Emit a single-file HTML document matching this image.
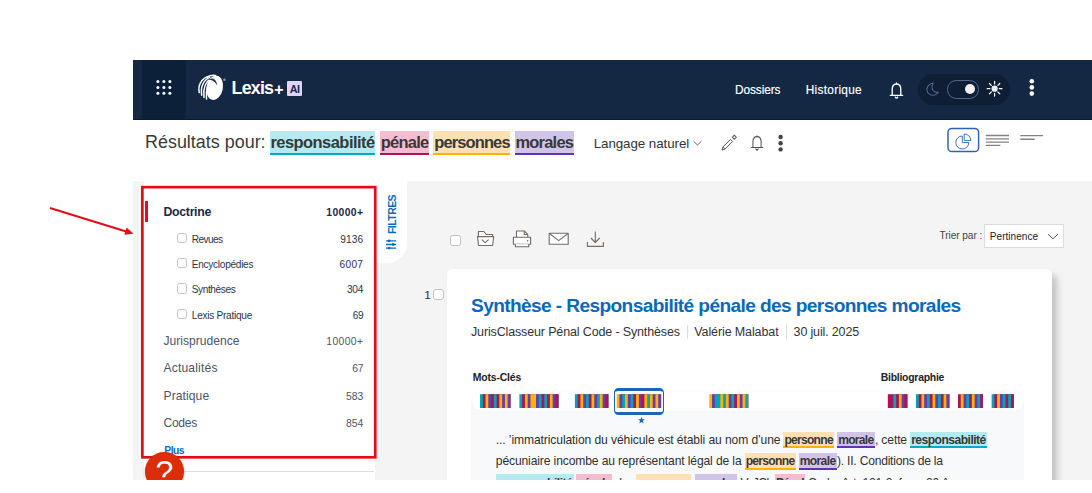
<!DOCTYPE html>
<html lang="fr">
<head>
<meta charset="utf-8">
<title>Lexis+ AI</title>
<style>
*{box-sizing:border-box;margin:0;padding:0}
html,body{width:1092px;height:493px;overflow:hidden;background:#fff}
body{font-family:"Liberation Sans",sans-serif;color:#333;position:relative}
.abs{position:absolute}
.t{position:absolute;white-space:nowrap;line-height:1}
svg{position:absolute;overflow:visible}
#app{position:absolute;left:133px;top:60px;width:959px;height:420px;overflow:hidden;background:#f4f4f4}
#pg{position:absolute;left:-133px;top:-60px;width:1092px;height:493px}
#hdr{left:133px;top:60px;width:959px;height:60px;background:#142843;border-bottom:1px solid #08193a}
#gridbtn{left:142px;top:60px;width:44px;height:59px;background:#0c203a}
#sbar{left:133px;top:120px;width:959px;height:61px;background:#fff}
.hb{position:absolute;border-bottom:2px solid}
.c1{background:#b2ebf2;border-color:#00acc1}
.c2{background:#f8bbd0;border-color:#ad1457}
.c3{background:#ffe0b2;border-color:#ffb300}
.c4{background:#d1c4e9;border-color:#5e35b1}
#panel{left:144px;top:181px;width:230.5px;height:299px;background:#fff}
#tab{left:374.5px;top:181px;width:32.5px;height:81.5px;background:#fff;border-radius:0 0 20px 0}
#redbox{left:141px;top:185.6px;width:235.7px;height:273px;border:3px solid #e8182a}
.cb{position:absolute;width:10px;height:10px;border:1px solid #c2c2c2;border-radius:2.5px;background:#fff}
#card{left:446.8px;top:269.1px;width:605.1px;height:230px;background:#fff;border-radius:5.5px;box-shadow:5px 6px 7px rgba(0,0,0,.21)}
#snip{left:471px;top:401px;width:552.7px;height:90px;background:#f8f9fb}
#pill{left:471.6px;top:391.8px;width:552.6px;height:19px;background:#fff;border-radius:10px;box-shadow:0 0 1.5px rgba(0,0,0,.10)}
.g{position:absolute;top:394.2px;height:13.8px;display:flex}
.g i{display:block;width:2.77px;height:100%;flex:none}
.a{background:#00a5b8}.b{background:#ad1457}.c{background:#ffb300}.d{background:#673ab7}
#sel{left:613.8px;top:387.8px;width:50.4px;height:27.4px;border:1.2px solid #1f63b5;border-top-width:3.2px;border-bottom-width:3.4px;border-radius:4.5px;background:#fff}
#sortbox{left:984.3px;top:224.4px;width:79.3px;height:23.4px;background:#fff;border:1px solid #dcdcdc}
#help{left:145px;top:452.3px;width:38.6px;height:38.6px;border-radius:50%;background:#da2d08;box-shadow:0 1px 3px rgba(0,0,0,.25)}
#hline{left:183px;top:470.7px;width:191px;height:1px;background:#dcdfe3}
#piebtn{left:947.1px;top:127.6px;width:32.3px;height:24.7px;border:1.5px solid #2f62b3;border-radius:4.5px;background:#fff}
#mark{left:145.3px;top:201.3px;width:3.2px;height:20.5px;background:#e00f20}
#tog{left:918px;top:74px;width:92px;height:30.6px;border-radius:15.3px;background:#0d1e35}
#track{left:946.6px;top:80.1px;width:32.8px;height:18.5px;border-radius:9.3px;border:1px solid #53688c}
#knob{left:964.8px;top:84.2px;width:10.2px;height:10.2px;border-radius:50%;background:#f0f0f0}
#ai{left:287.1px;top:81.2px;width:15.4px;height:15px;background:#e2d3fa;border-radius:1px}
.vsep{position:absolute;width:1px;background:#dcdcdc;top:325px;height:14px}
</style>
</head>
<body>
<svg style="left:0;top:0" width="1092" height="493" viewBox="0 0 1092 493"><line x1="50" y1="208" x2="127" y2="231.8" stroke="#e70b16" stroke-width="2.1"/><path d="M133.6 233.7 L124.3 234.7 L126.6 227.6 Z" fill="#e70b16"/></svg>
<div id="app"><div id="pg">
<div id="hdr" class="abs"></div>
<div id="gridbtn" class="abs"></div>
<div id="sbar" class="abs"></div>
<div id="panel" class="abs"></div>
<div id="tab" class="abs"></div>
<div id="card" class="abs"></div>
<div id="snip" class="abs"></div>
<div id="pill" class="abs"></div>
<div id="mark" class="abs"></div>
<div id="hline" class="abs"></div>
<div class="cb" style="left:177.3px;top:233px;width:10.2px;height:10.2px"></div>
<div class="cb" style="left:177.3px;top:258.2px;width:10.2px;height:10.2px"></div>
<div class="cb" style="left:177.3px;top:283.4px;width:10.2px;height:10.2px"></div>
<div class="cb" style="left:177.3px;top:308.6px;width:10.2px;height:10.2px"></div>
<div class="cb" style="left:450.2px;top:235.2px;width:11px;height:11px"></div>
<div class="cb" style="left:433.2px;top:289px;width:11.2px;height:11.3px;border-radius:3px"></div>
<div id="sortbox" class="abs"></div>
<div id="tog" class="abs"></div>
<div id="track" class="abs"></div>
<div id="knob" class="abs"></div>
<div id="ai" class="abs"></div>
<div class="vsep" style="left:687px"></div>
<div class="vsep" style="left:786px"></div>
<div id="sel" class="abs"></div>
<svg style="left:0;top:0" width="1092" height="493" viewBox="0 0 1092 493">
<rect x="480.00" y="394.2" width="30.47" height="13.8" fill="#00a5b8"/>
<rect x="482.77" y="394.2" width="27.70" height="13.8" fill="#ad1457"/>
<rect x="485.54" y="394.2" width="24.93" height="13.8" fill="#ffb300"/>
<rect x="488.31" y="394.2" width="22.16" height="13.8" fill="#673ab7"/>
<rect x="491.08" y="394.2" width="19.39" height="13.8" fill="#ad1457"/>
<rect x="493.85" y="394.2" width="16.62" height="13.8" fill="#00a5b8"/>
<rect x="496.62" y="394.2" width="13.85" height="13.8" fill="#ad1457"/>
<rect x="499.39" y="394.2" width="11.08" height="13.8" fill="#ffb300"/>
<rect x="502.16" y="394.2" width="8.31" height="13.8" fill="#673ab7"/>
<rect x="504.93" y="394.2" width="5.54" height="13.8" fill="#ffb300"/>
<rect x="507.70" y="394.2" width="2.77" height="13.8" fill="#673ab7"/>
<rect x="519.40" y="394.2" width="38.78" height="13.8" fill="#00a5b8"/>
<rect x="522.17" y="394.2" width="36.01" height="13.8" fill="#ad1457"/>
<rect x="524.94" y="394.2" width="33.24" height="13.8" fill="#ffb300"/>
<rect x="527.71" y="394.2" width="30.47" height="13.8" fill="#673ab7"/>
<rect x="530.48" y="394.2" width="27.70" height="13.8" fill="#ffb300"/>
<rect x="536.02" y="394.2" width="22.16" height="13.8" fill="#673ab7"/>
<rect x="538.79" y="394.2" width="19.39" height="13.8" fill="#00a5b8"/>
<rect x="541.56" y="394.2" width="16.62" height="13.8" fill="#ad1457"/>
<rect x="544.33" y="394.2" width="13.85" height="13.8" fill="#00a5b8"/>
<rect x="547.10" y="394.2" width="11.08" height="13.8" fill="#ad1457"/>
<rect x="549.87" y="394.2" width="8.31" height="13.8" fill="#ffb300"/>
<rect x="552.64" y="394.2" width="5.54" height="13.8" fill="#673ab7"/>
<rect x="555.41" y="394.2" width="2.77" height="13.8" fill="#ad1457"/>
<rect x="574.90" y="394.2" width="33.24" height="13.8" fill="#00a5b8"/>
<rect x="577.67" y="394.2" width="30.47" height="13.8" fill="#ad1457"/>
<rect x="580.44" y="394.2" width="27.70" height="13.8" fill="#ffb300"/>
<rect x="583.21" y="394.2" width="24.93" height="13.8" fill="#673ab7"/>
<rect x="585.98" y="394.2" width="22.16" height="13.8" fill="#00a5b8"/>
<rect x="588.75" y="394.2" width="19.39" height="13.8" fill="#ad1457"/>
<rect x="591.52" y="394.2" width="16.62" height="13.8" fill="#ffb300"/>
<rect x="594.29" y="394.2" width="13.85" height="13.8" fill="#673ab7"/>
<rect x="597.06" y="394.2" width="11.08" height="13.8" fill="#00a5b8"/>
<rect x="599.83" y="394.2" width="8.31" height="13.8" fill="#ffb300"/>
<rect x="602.60" y="394.2" width="5.54" height="13.8" fill="#673ab7"/>
<rect x="605.37" y="394.2" width="2.77" height="13.8" fill="#ad1457"/>
<rect x="616.70" y="394.2" width="44.32" height="13.8" fill="#ffb300"/>
<rect x="619.47" y="394.2" width="41.55" height="13.8" fill="#673ab7"/>
<rect x="622.24" y="394.2" width="38.78" height="13.8" fill="#00a5b8"/>
<rect x="625.01" y="394.2" width="36.01" height="13.8" fill="#ffb300"/>
<rect x="627.78" y="394.2" width="33.24" height="13.8" fill="#673ab7"/>
<rect x="630.55" y="394.2" width="30.47" height="13.8" fill="#00a5b8"/>
<rect x="633.32" y="394.2" width="27.70" height="13.8" fill="#ad1457"/>
<rect x="636.09" y="394.2" width="24.93" height="13.8" fill="#ffb300"/>
<rect x="638.86" y="394.2" width="22.16" height="13.8" fill="#673ab7"/>
<rect x="641.63" y="394.2" width="19.39" height="13.8" fill="#ad1457"/>
<rect x="644.40" y="394.2" width="16.62" height="13.8" fill="#ffb300"/>
<rect x="647.17" y="394.2" width="13.85" height="13.8" fill="#00a5b8"/>
<rect x="649.94" y="394.2" width="11.08" height="13.8" fill="#ffb300"/>
<rect x="652.71" y="394.2" width="8.31" height="13.8" fill="#673ab7"/>
<rect x="655.48" y="394.2" width="5.54" height="13.8" fill="#ffb300"/>
<rect x="658.25" y="394.2" width="2.77" height="13.8" fill="#673ab7"/>
<rect x="709.30" y="394.2" width="38.78" height="13.8" fill="#ffb300"/>
<rect x="712.07" y="394.2" width="36.01" height="13.8" fill="#673ab7"/>
<rect x="714.84" y="394.2" width="33.24" height="13.8" fill="#00a5b8"/>
<rect x="720.38" y="394.2" width="27.70" height="13.8" fill="#ffb300"/>
<rect x="723.15" y="394.2" width="24.93" height="13.8" fill="#00a5b8"/>
<rect x="725.92" y="394.2" width="22.16" height="13.8" fill="#ffb300"/>
<rect x="728.69" y="394.2" width="19.39" height="13.8" fill="#673ab7"/>
<rect x="731.46" y="394.2" width="16.62" height="13.8" fill="#00a5b8"/>
<rect x="734.23" y="394.2" width="13.85" height="13.8" fill="#ad1457"/>
<rect x="737.00" y="394.2" width="11.08" height="13.8" fill="#ffb300"/>
<rect x="739.77" y="394.2" width="8.31" height="13.8" fill="#673ab7"/>
<rect x="742.54" y="394.2" width="5.54" height="13.8" fill="#ffb300"/>
<rect x="745.31" y="394.2" width="2.77" height="13.8" fill="#00a5b8"/>
<rect x="887.80" y="394.2" width="19.39" height="13.8" fill="#ad1457"/>
<rect x="893.34" y="394.2" width="13.85" height="13.8" fill="#00a5b8"/>
<rect x="896.11" y="394.2" width="11.08" height="13.8" fill="#ad1457"/>
<rect x="898.88" y="394.2" width="8.31" height="13.8" fill="#ffb300"/>
<rect x="901.65" y="394.2" width="5.54" height="13.8" fill="#673ab7"/>
<rect x="904.42" y="394.2" width="2.77" height="13.8" fill="#ad1457"/>
<rect x="915.90" y="394.2" width="33.24" height="13.8" fill="#00a5b8"/>
<rect x="918.67" y="394.2" width="30.47" height="13.8" fill="#ad1457"/>
<rect x="921.44" y="394.2" width="27.70" height="13.8" fill="#ffb300"/>
<rect x="924.21" y="394.2" width="24.93" height="13.8" fill="#673ab7"/>
<rect x="926.98" y="394.2" width="22.16" height="13.8" fill="#00a5b8"/>
<rect x="929.75" y="394.2" width="19.39" height="13.8" fill="#ad1457"/>
<rect x="932.52" y="394.2" width="16.62" height="13.8" fill="#ffb300"/>
<rect x="935.29" y="394.2" width="13.85" height="13.8" fill="#673ab7"/>
<rect x="938.06" y="394.2" width="11.08" height="13.8" fill="#00a5b8"/>
<rect x="940.83" y="394.2" width="8.31" height="13.8" fill="#ad1457"/>
<rect x="943.60" y="394.2" width="5.54" height="13.8" fill="#ffb300"/>
<rect x="946.37" y="394.2" width="2.77" height="13.8" fill="#673ab7"/>
<rect x="958.00" y="394.2" width="24.93" height="13.8" fill="#ad1457"/>
<rect x="960.77" y="394.2" width="22.16" height="13.8" fill="#ffb300"/>
<rect x="963.54" y="394.2" width="19.39" height="13.8" fill="#673ab7"/>
<rect x="966.31" y="394.2" width="16.62" height="13.8" fill="#00a5b8"/>
<rect x="969.08" y="394.2" width="13.85" height="13.8" fill="#ad1457"/>
<rect x="971.85" y="394.2" width="11.08" height="13.8" fill="#ffb300"/>
<rect x="974.62" y="394.2" width="8.31" height="13.8" fill="#673ab7"/>
<rect x="977.39" y="394.2" width="5.54" height="13.8" fill="#00a5b8"/>
<rect x="980.16" y="394.2" width="2.77" height="13.8" fill="#ad1457"/>
<rect x="991.60" y="394.2" width="22.16" height="13.8" fill="#00a5b8"/>
<rect x="994.37" y="394.2" width="19.39" height="13.8" fill="#ad1457"/>
<rect x="997.14" y="394.2" width="16.62" height="13.8" fill="#ffb300"/>
<rect x="999.91" y="394.2" width="13.85" height="13.8" fill="#673ab7"/>
<rect x="1002.68" y="394.2" width="11.08" height="13.8" fill="#00a5b8"/>
<rect x="1005.45" y="394.2" width="8.31" height="13.8" fill="#ad1457"/>
<rect x="1008.22" y="394.2" width="5.54" height="13.8" fill="#00a5b8"/>
<rect x="1010.99" y="394.2" width="2.77" height="13.8" fill="#ad1457"/>
</svg>
<svg style="left:0;top:0" width="1092" height="493" viewBox="0 0 1092 493" fill="none">
<!-- grid dots -->
<g fill="#fff"><circle cx="157.9" cy="81.6" r="1.5"/><circle cx="163.9" cy="81.6" r="1.5"/><circle cx="169.9" cy="81.6" r="1.5"/><circle cx="157.9" cy="87.4" r="1.5"/><circle cx="163.9" cy="87.4" r="1.5"/><circle cx="169.9" cy="87.4" r="1.5"/><circle cx="157.9" cy="93.2" r="1.5"/><circle cx="163.9" cy="93.2" r="1.5"/><circle cx="169.9" cy="93.2" r="1.5"/></g>
<!-- logo -->
<g>
<g stroke="#fff" stroke-width="1.5" stroke-linecap="round">
<path d="M208.4 76.4 C201.4 78.6 197.6 85.4 199.3 92.6"/>
<path d="M209.8 77.4 C203.6 79.8 200.3 86.6 201.7 95.2"/>
<path d="M211 78.6 C205.8 81.4 203 88 204 97.4"/>
<path d="M212.2 79.8 C208.1 82.8 205.7 89.6 206.5 99"/>
</g>
<ellipse cx="214.7" cy="87.7" rx="8.2" ry="12.3" transform="rotate(11 214.7 87.7)" fill="#fff"/>
<path d="M207.2 77.2 C209.6 75.6 212.6 75 215.4 75.4" stroke="#fff" stroke-width="1.4" stroke-linecap="round"/>
<path d="M208.3 79.4 C210.8 78.2 213.6 78.4 215.1 79.9 C216.4 81.5 216.9 83.4 217 85.4 C215.9 83.1 214.7 81.7 212.9 80.8 C211.5 80.1 210 79.7 208.3 79.4 Z" fill="#2b3e5e"/>
<path d="M213.4 79.6 C215 80.4 216.4 82.6 217 85.4 C216 83.2 214.8 81.6 213 80.8 Z" fill="#142843"/>
<circle cx="224.4" cy="79.7" r="1.3" fill="#8792a8"/>
</g>
<!-- header bell -->
<g stroke="#fff" stroke-width="1.35" stroke-linecap="round" stroke-linejoin="round">
<path d="M892.2 95.3 V89.6 C892.2 86.2 893.9 84 896.5 84 C899.1 84 900.8 86.2 900.8 89.6 V95.3"/>
<path d="M890.4 95.4 H902.6"/>
<path d="M895.4 97.2 C895.8 98.2 897.2 98.2 897.6 97.2"/>
<path d="M896.5 83 V84"/>
</g>
<!-- moon -->
<path d="M933.2 83 C929 83.6 926.6 87 926.9 90.2 C927.3 94 931 96 934.6 95 C936.2 94.5 937.6 93.5 938.3 92.2 C933.6 93.2 930.2 88.6 933.2 83 Z" stroke="#4f668f" stroke-width="1.1" stroke-linejoin="round"/>
<!-- sun -->
<g stroke="#fff" stroke-width="1.2" stroke-linecap="round"><circle cx="994.6" cy="88.7" r="3.1" fill="#e8eefc" stroke="none"/>
<path d="M994.6 81.3V84M994.6 93.4V96.1M987.2 88.7H989.9M999.3 88.7H1002M989.4 83.5L991.3 85.4M997.9 92L999.8 93.9M989.4 93.9L991.3 92M997.9 85.4L999.8 83.5"/></g>
<!-- kebab header -->
<g fill="#fff"><circle cx="1031.8" cy="81.2" r="2.3"/><circle cx="1031.8" cy="87.4" r="2.3"/><circle cx="1031.8" cy="93.6" r="2.3"/></g>
<!-- searchbar: chevron, pencil, bell, kebab -->
<path d="M693.6 141.3 L697.5 145 L701.4 141.3" stroke="#666" stroke-width="1"/>
<g stroke="#555" stroke-width="1" stroke-linejoin="round"><path d="M722 150 L723 146.9 L730.5 139.4 L732.6 141.5 L725.1 149 Z"/><path d="M723 146.9 L725.1 149"/><rect x="732.9" y="135.8" width="2.9" height="2.9" transform="rotate(45 734.35 137.25)"/></g>
<g stroke="#555" stroke-width="1.05" stroke-linecap="round" stroke-linejoin="round"><path d="M752.9 147.4 V141.8 C752.9 138.6 754.6 136.6 757 136.6 C759.4 136.6 761.1 138.6 761.1 141.8 V147.4"/><path d="M751.3 147.5 H762.8"/><path d="M755.8 148.9 L757 150.3 L758.2 148.9"/><path d="M757 135.7V136.6"/></g>
<g fill="#444"><circle cx="780.6" cy="137" r="2.2"/><circle cx="780.6" cy="143.2" r="2.2"/><circle cx="780.6" cy="149.4" r="2.2"/></g>
<!-- pie icon -->
<rect x="948" y="128.4" width="30.6" height="23.1" rx="3.8" fill="#fff" stroke="#2f60b2" stroke-width="1.45"/>
<g stroke="#3a69b8" stroke-width=".95" stroke-linejoin="round"><path d="M962.3 136 A6.5 6.5 0 1 0 968.8 142.5 H962.3 Z"/><path d="M964.2 134 A6.6 6.6 0 0 1 970.9 140.6 H964.2 Z"/></g>
<!-- lines icons -->
<g stroke="#828282" stroke-width="1.35"><path d="M985.8 135.5H1009M985.8 138.8H1009M985.8 142.1H1009M985.8 145.3H1000.3"/><path d="M1020.3 135.6H1043.1M1020.3 139.2H1034.6"/></g>
<!-- filter sliders icon -->
<g stroke="#0a6cc0" stroke-width="1.3" fill="#0a6cc0"><path d="M386 240.9H396.2M386 244.5H396.2M386 248.1H396.2"/><circle cx="389.1" cy="240.9" r=".75"/><circle cx="393.2" cy="244.5" r=".75"/><circle cx="389.1" cy="248.1" r=".75"/></g>
<!-- toolbar icons -->
<g stroke="#736b65" stroke-width="1.1" stroke-linejoin="round" fill="#fff">
<path d="M478.4 237 V231.5 H483.8 L486.2 234.5 H492.6 V237"/>
<path d="M477.5 236.6 H493.7 L492.6 245.5 H478.6 Z"/>
<path d="M481.8 239.6 L485.2 242.6 L488.6 239.6" fill="none"/>
<path d="M516.5 237.2 V231 H524.3 L527.7 234.4 V237.2"/>
<path d="M524.2 231.2 V234.5 H527.5" fill="none"/>
<rect x="513.4" y="237.2" width="17.2" height="7"/>
<path d="M515.4 244.2 V246.7 H528.7 V244.2"/>
<rect x="549.2" y="233.3" width="19" height="10.9"/>
<path d="M549.4 233.5 L558.7 240.6 L568 233.5" fill="none"/>
<path d="M595.3 231.4 V242.4 M590.9 238 L595.3 242.5 L599.7 238" fill="none"/>
<path d="M587.4 242 V246.4 H603.4 V242" fill="none"/>
</g>
<circle cx="527.6" cy="240.7" r=".8" fill="#6b635d"/>
<!-- select chevron -->
<path d="M1048 234.3 L1052.9 238.8 L1057.8 234.3" stroke="#555" stroke-width="1"/>
</svg>
<span class="t" style="left:386.9px;top:234.3px;font-size:10.5px;font-weight:700;color:#0a6cc0;transform-origin:0 0;transform:rotate(-90deg);letter-spacing:-.56px" id="filt">FILTRES</span>
<svg style="left:0;top:0" width="1092" height="493" viewBox="0 0 1092 493"><polygon points="641.50,416.70 642.38,419.19 645.02,419.26 642.93,420.86 643.67,423.39 641.50,421.90 639.33,423.39 640.07,420.86 637.98,419.26 640.62,419.19" fill="#1f63b5"/></svg>

<span class="t" style="left:231.60px;top:80.00px;font-size:17.84px;font-weight:700;color:#fff;letter-spacing:-0.799px;">Lexis</span>
<span class="t" style="left:274.30px;top:82.00px;font-size:16.00px;font-weight:700;color:#fff;letter-spacing:0.000px;">+</span>
<span class="t" style="left:289.80px;top:84.00px;font-size:10.80px;font-weight:700;color:#1a2a48;letter-spacing:-0.606px;">AI</span>
<span class="t" style="left:735.00px;top:85.00px;font-size:11.85px;font-weight:400;color:#fff;letter-spacing:-0.085px;-webkit-text-stroke:.15px #fff;">Dossiers</span>
<span class="t" style="left:805.70px;top:85.00px;font-size:11.85px;font-weight:400;color:#fff;letter-spacing:0.297px;-webkit-text-stroke:.15px #fff;">Historique</span>
<span class="t" style="left:145.00px;top:134.00px;font-size:17.94px;font-weight:400;color:#3a3a3a;letter-spacing:-0.003px;">Résultats pour:</span>
<span class="t" style="left:593.70px;top:137.00px;font-size:13.36px;font-weight:400;color:#333;letter-spacing:-0.072px;">Langage naturel</span>
<span class="t" style="left:163.50px;top:206.00px;font-size:12.30px;font-weight:700;color:#1b2a41;letter-spacing:-0.299px;">Doctrine</span>
<span class="t" style="left:326.30px;top:208.00px;font-size:10.33px;font-weight:700;color:#1b2a41;letter-spacing:0.372px;">10000+</span>
<span class="t" style="left:191.80px;top:235.00px;font-size:10.10px;font-weight:400;color:#2b3447;letter-spacing:-0.606px;">Revues</span>
<span class="t" style="left:340.30px;top:235.00px;font-size:10.10px;font-weight:400;color:#2b3447;letter-spacing:0.133px;">9136</span>
<span class="t" style="left:191.80px;top:260.00px;font-size:10.10px;font-weight:400;color:#2b3447;letter-spacing:-0.284px;">Encyclopédies</span>
<span class="t" style="left:339.50px;top:260.00px;font-size:10.10px;font-weight:400;color:#2b3447;letter-spacing:0.333px;">6007</span>
<span class="t" style="left:191.80px;top:285.00px;font-size:10.10px;font-weight:400;color:#2b3447;letter-spacing:-0.405px;">Synthèses</span>
<span class="t" style="left:346.90px;top:285.00px;font-size:10.10px;font-weight:400;color:#2b3447;letter-spacing:-0.148px;">304</span>
<span class="t" style="left:191.80px;top:311.00px;font-size:10.10px;font-weight:400;color:#2b3447;letter-spacing:-0.269px;">Lexis Pratique</span>
<span class="t" style="left:352.70px;top:311.00px;font-size:10.10px;font-weight:400;color:#2b3447;letter-spacing:-0.317px;">69</span>
<span class="t" style="left:163.50px;top:335.00px;font-size:12.09px;font-weight:400;color:#4b5565;letter-spacing:0.010px;">Jurisprudence</span>
<span class="t" style="left:326.30px;top:337.00px;font-size:10.33px;font-weight:400;color:#4b5565;letter-spacing:0.372px;">10000+</span>
<span class="t" style="left:163.50px;top:362.00px;font-size:12.09px;font-weight:400;color:#4b5565;letter-spacing:0.173px;">Actualités</span>
<span class="t" style="left:352.20px;top:364.00px;font-size:10.33px;font-weight:400;color:#4b5565;letter-spacing:-0.200px;">67</span>
<span class="t" style="left:163.50px;top:390.00px;font-size:12.09px;font-weight:400;color:#4b5565;letter-spacing:0.088px;">Pratique</span>
<span class="t" style="left:346.00px;top:392.00px;font-size:10.33px;font-weight:400;color:#4b5565;letter-spacing:0.022px;">583</span>
<span class="t" style="left:163.50px;top:417.00px;font-size:12.09px;font-weight:400;color:#4b5565;letter-spacing:-0.284px;">Codes</span>
<span class="t" style="left:346.00px;top:419.00px;font-size:10.33px;font-weight:400;color:#4b5565;letter-spacing:0.022px;">854</span>
<span class="t" style="left:164.30px;top:446.00px;font-size:10.33px;font-weight:700;color:#0a6cc0;letter-spacing:-0.503px;">Plus</span>
<span class="t" style="left:939.40px;top:231.00px;font-size:10.14px;font-weight:400;color:#444;letter-spacing:-0.065px;">Trier par :</span>
<span class="t" style="left:989.80px;top:232.00px;font-size:10.04px;font-weight:400;color:#222;letter-spacing:0.033px;">Pertinence</span>
<span class="t" style="left:424.20px;top:290.00px;font-size:11.80px;font-weight:400;color:#333;letter-spacing:-0.963px;">1</span>
<span class="t" style="left:471.00px;top:296.00px;font-size:19.14px;font-weight:700;color:#0b69b9;letter-spacing:-0.617px;">Synthèse - Responsabilité pénale des personnes morales</span>
<span class="t" style="left:471.00px;top:326.00px;font-size:12.50px;font-weight:400;color:#333;letter-spacing:-0.144px;">JurisClasseur Pénal Code - Synthèses</span>
<span class="t" style="left:694.30px;top:326.00px;font-size:12.50px;font-weight:400;color:#333;letter-spacing:-0.116px;">Valérie Malabat</span>
<span class="t" style="left:793.60px;top:326.00px;font-size:12.50px;font-weight:400;color:#333;letter-spacing:-0.156px;">30 juil. 2025</span>
<span class="t" style="left:472.70px;top:373.00px;font-size:10.43px;font-weight:700;color:#222;letter-spacing:-0.146px;">Mots-Clés</span>
<span class="t" style="left:880.70px;top:373.00px;font-size:10.43px;font-weight:700;color:#222;letter-spacing:-0.238px;">Bibliographie</span>
<span class="t" style="left:495.80px;top:434.00px;font-size:12.10px;font-weight:400;color:#303030;letter-spacing:-0.102px;">... ’immatriculation du véhicule est établi au nom d’une</span>
<span class="t" style="left:874.90px;top:434.00px;font-size:12.10px;font-weight:400;color:#303030;letter-spacing:-0.122px;">, cette</span>
<span class="t" style="left:495.80px;top:455.00px;font-size:12.10px;font-weight:400;color:#303030;letter-spacing:-0.125px;">pécuniaire incombe au représentant légal de la</span>
<span class="t" style="left:837.00px;top:455.00px;font-size:12.10px;font-weight:400;color:#303030;letter-spacing:-0.223px;">). II. Conditions de la</span>
<span class="t" style="left:615.30px;top:477.00px;font-size:12.10px;font-weight:400;color:#303030;letter-spacing:-0.667px;">des</span>
<span class="t" style="left:740.60px;top:477.00px;font-size:12.10px;font-weight:400;color:#303030;letter-spacing:-0.502px;">V. JCl.</span>
<span class="t" style="left:808.00px;top:477.00px;font-size:12.10px;font-weight:400;color:#303030;letter-spacing:-0.233px;">Code, Art. 121-2, fasc. 20 A. ...</span>
<div class="hb c1" style="left:269.60px;top:131.00px;width:105.80px;height:24.30px"><span class="t" style="left:0.80px;top:3.00px;font-size:16.48px;font-weight:700;color:#383838;letter-spacing:-0.533px">responsabilité</span></div>
<div class="hb c2" style="left:379.90px;top:131.00px;width:49.30px;height:24.30px"><span class="t" style="left:0.80px;top:3.00px;font-size:16.48px;font-weight:700;color:#383838;letter-spacing:-0.748px">pénale</span></div>
<div class="hb c3" style="left:433.40px;top:131.00px;width:77.10px;height:24.30px"><span class="t" style="left:0.80px;top:3.00px;font-size:16.48px;font-weight:700;color:#383838;letter-spacing:-0.866px">personnes</span></div>
<div class="hb c4" style="left:514.60px;top:131.00px;width:59.40px;height:24.30px"><span class="t" style="left:0.80px;top:3.00px;font-size:16.48px;font-weight:700;color:#383838;letter-spacing:-0.767px">morales</span></div>
<div class="hb c3" style="left:783.20px;top:431.80px;width:50.90px;height:16.70px"><span class="t" style="left:1.20px;top:2.20px;font-size:12.10px;font-weight:700;color:#383838;letter-spacing:-0.742px">personne</span></div>
<div class="hb c4" style="left:837.00px;top:431.80px;width:37.70px;height:16.70px"><span class="t" style="left:1.20px;top:2.20px;font-size:12.10px;font-weight:700;color:#383838;letter-spacing:-0.729px">morale</span></div>
<div class="hb c1" style="left:910.00px;top:431.80px;width:77.00px;height:16.70px"><span class="t" style="left:1.20px;top:2.20px;font-size:12.10px;font-weight:700;color:#383838;letter-spacing:-0.529px">responsabilité</span></div>
<div class="hb c3" style="left:744.50px;top:453.00px;width:51.10px;height:16.70px"><span class="t" style="left:1.20px;top:2.00px;font-size:12.10px;font-weight:700;color:#383838;letter-spacing:-0.717px">personne</span></div>
<div class="hb c4" style="left:798.50px;top:453.00px;width:38.20px;height:16.70px"><span class="t" style="left:1.20px;top:2.00px;font-size:12.10px;font-weight:700;color:#383838;letter-spacing:-0.645px">morale</span></div>
<div class="hb c1" style="left:496.00px;top:474.20px;width:77.50px;height:16.70px"><span class="t" style="left:1.20px;top:2.80px;font-size:12.10px;font-weight:700;color:#383838;letter-spacing:-0.493px">responsabilité</span></div>
<div class="hb c2" style="left:575.60px;top:474.20px;width:36.40px;height:16.70px"><span class="t" style="left:1.20px;top:2.80px;font-size:12.10px;font-weight:700;color:#383838;letter-spacing:-0.721px">pénale</span></div>
<div class="hb c3" style="left:635.80px;top:474.20px;width:55.70px;height:16.70px"><span class="t" style="left:1.20px;top:2.80px;font-size:12.10px;font-weight:700;color:#383838;letter-spacing:-0.875px">personnes</span></div>
<div class="hb c4" style="left:694.70px;top:474.20px;width:42.70px;height:16.70px"><span class="t" style="left:1.20px;top:2.80px;font-size:12.10px;font-weight:700;color:#383838;letter-spacing:-0.870px">morales</span></div>
<div class="hb c2" style="left:774.70px;top:474.20px;width:30.20px;height:16.70px"><span class="t" style="left:1.20px;top:2.80px;font-size:12.10px;font-weight:700;color:#383838;letter-spacing:-0.896px">Pénal</span></div>
<svg style="left:0;top:0" width="1092" height="493" viewBox="0 0 1092 493"><rect x="142.35" y="187.15" width="232.9" height="270.15" fill="none" stroke="#e70b16" stroke-width="2.7"/></svg>
<div id="help" class="abs"></div>
<span class="t" style="left:155.6px;top:456px;font-size:32px;font-weight:400;color:#fff">?</span>
</div></div>
</body>
</html>
